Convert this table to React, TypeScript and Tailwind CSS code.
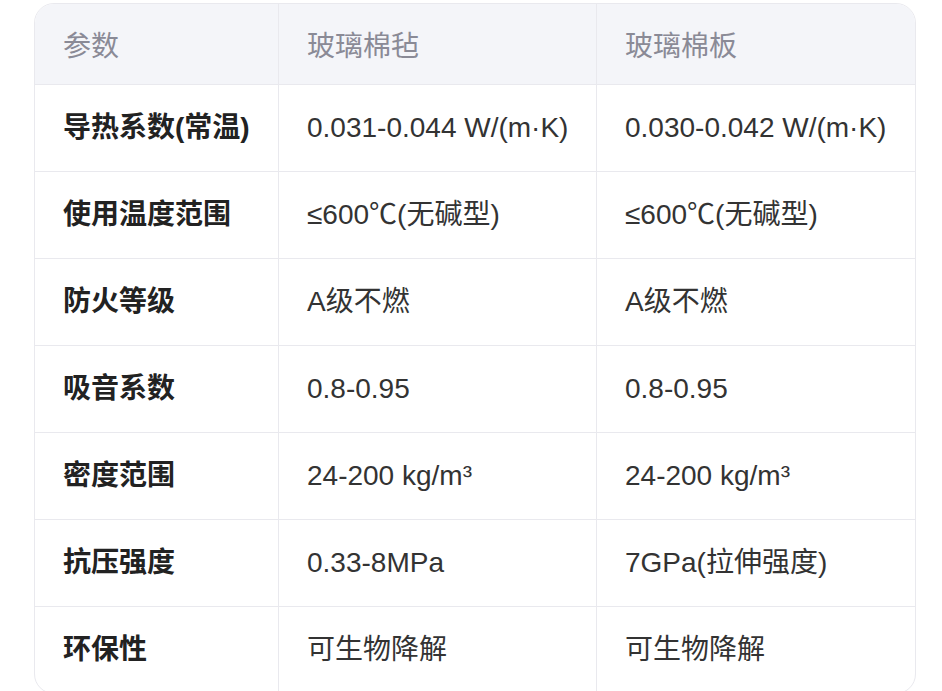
const HEAD = ['参数', '玻璃棉毡', '玻璃棉板'];

const ROWS: [string, string, string][] = [
  ['导热系数(常温)', '0.031-0.044 W/(m·K)', '0.030-0.042 W/(m·K)'],
  ['使用温度范围', '≤600℃(无碱型)', '≤600℃(无碱型)'],
  ['防火等级', 'A级不燃', 'A级不燃'],
  ['吸音系数', '0.8-0.95', '0.8-0.95'],
  ['密度范围', '24-200 kg/m³', '24-200 kg/m³'],
  ['抗压强度', '0.33-8MPa', '7GPa(拉伸强度)'],
  ['环保性', '可生物降解', '可生物降解'],
];

const cols = 'grid grid-cols-[244px_318px_1fr]';

export default function App() {
  return (
    <div className="min-h-screen bg-white pl-[34px] pt-[3px] font-['Liberation_Sans','Noto_Sans_CJK_SC',sans-serif] text-[28px]">
      <div className="w-[882px] overflow-hidden rounded-[20px] border border-[#e9e9ee]">
        <div className={`${cols} h-[81px] border-b border-[#e9e9ee] bg-[#f4f5f9] text-[#8a8a96]`}>
          {HEAD.map((h, i) => (
            <div
              key={h}
              className={`flex items-center px-[28px] pt-[6px] ${i < 2 ? 'border-r border-[#e9e9ee]' : ''}`}
            >
              {h}
            </div>
          ))}
        </div>

        {ROWS.map((row, r) => (
          <div
            key={row[0]}
            className={`${cols} ${r < ROWS.length - 1 ? 'h-[87px] border-b border-[#e9e9ee]' : 'h-[86px]'} text-[#333333]`}
          >
            {row.map((cell, i) => (
              <div
                key={i}
                className={`flex items-center whitespace-nowrap px-[28px] ${i < 2 ? 'border-r border-[#e9e9ee]' : ''} ${i === 0 ? 'font-bold text-[#222222]' : ''}`}
              >
                {cell}
              </div>
            ))}
          </div>
        ))}
      </div>
    </div>
  );
}
